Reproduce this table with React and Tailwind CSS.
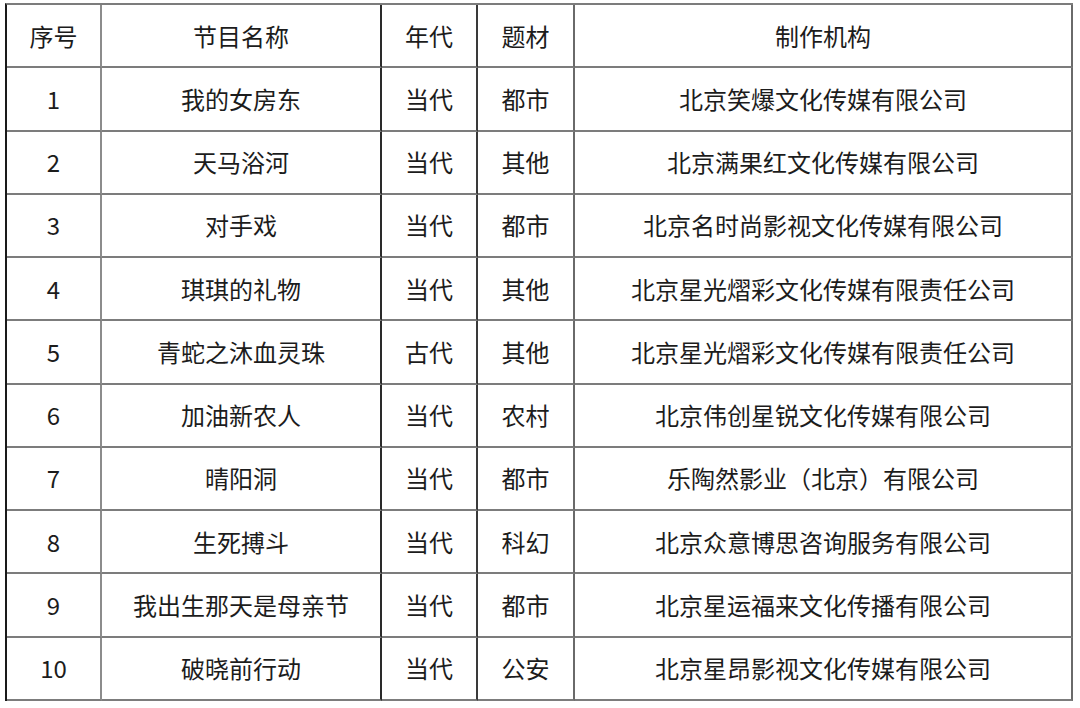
const rows = [
  ["1", "我的女房东", "当代", "都市", "北京笑爆文化传媒有限公司"],
  ["2", "天马浴河", "当代", "其他", "北京满果红文化传媒有限公司"],
  ["3", "对手戏", "当代", "都市", "北京名时尚影视文化传媒有限公司"],
  ["4", "琪琪的礼物", "当代", "其他", "北京星光熠彩文化传媒有限责任公司"],
  ["5", "青蛇之沐血灵珠", "古代", "其他", "北京星光熠彩文化传媒有限责任公司"],
  ["6", "加油新农人", "当代", "农村", "北京伟创星锐文化传媒有限公司"],
  ["7", "晴阳洞", "当代", "都市", "乐陶然影业（北京）有限公司"],
  ["8", "生死搏斗", "当代", "科幻", "北京众意博思咨询服务有限公司"],
  ["9", "我出生那天是母亲节", "当代", "都市", "北京星运福来文化传播有限公司"],
  ["10", "破晓前行动", "当代", "公安", "北京星昂影视文化传媒有限公司"],
];

const head = ["序号", "节目名称", "年代", "题材", "制作机构"];
const widths = ["w-[95px]", "w-[280px]", "w-[96px]", "w-[97px]", "w-[498px]"];
const rightBorder = [
  "border-r-[#8c8c8c]",
  "border-r-[#2a2a2a]",
  "border-r-[#3a3a3a]",
  "border-r-[#6a6a6a]",
  "border-r-[#6a6a6a]",
];

function Cell({ i, children }) {
  return (
    <td
      className={`${widths[i]} h-[63.25px] border-r-2 border-b-2 border-b-[#7c7c7c] ${rightBorder[i]} p-0 text-center align-middle text-[24px] leading-none`}
    >
      {children}
    </td>
  );
}

export default function App() {
  return (
    <div className="h-[708px] w-[1080px] bg-white pl-[5px] pt-[3px] text-[#1c1c1c] [font-family:'Noto_Sans_CJK_SC','Noto_Sans',sans-serif]">
      <table className="w-[1068px] table-fixed border-separate border-spacing-0 border-l-2 border-t-2 border-l-[#1a1a1a] border-t-[#7c7c7c]">
        <thead>
          <tr>
            {head.map((h, i) => (
              <Cell key={i} i={i}>
                {h}
              </Cell>
            ))}
          </tr>
        </thead>
        <tbody>
          {rows.map((r) => (
            <tr key={r[0]}>
              {r.map((c, i) => (
                <Cell key={i} i={i}>
                  {c}
                </Cell>
              ))}
            </tr>
          ))}
        </tbody>
      </table>
    </div>
  );
}
